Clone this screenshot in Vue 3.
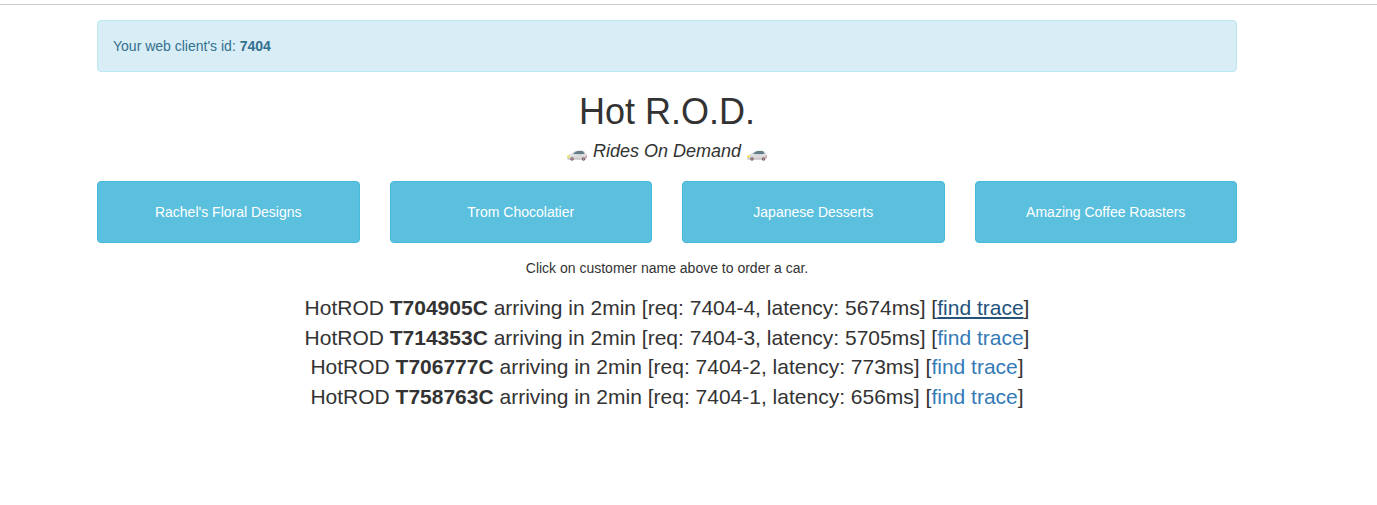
<script setup>
const clientId = 7404
const customers = [
  "Rachel's Floral Designs",
  'Trom Chocolatier',
  'Japanese Desserts',
  'Amazing Coffee Roasters',
]
const rides = [
  { car: 'T704905C', req: '7404-4', latency: '5674ms', active: true },
  { car: 'T714353C', req: '7404-3', latency: '5705ms' },
  { car: 'T706777C', req: '7404-2', latency: '773ms' },
  { car: 'T758763C', req: '7404-1', latency: '656ms' },
]
</script>

<template>
  <div class="page">
    <hr class="rule" />
    <main class="container">
      <div class="alert">Your web client's id: <strong>{{ clientId }}</strong></div>

      <svg class="defs" width="0" height="0" aria-hidden="true">
        <symbol id="car" viewBox="0 0 40 22">
          <path d="M1 12Q4 8 10 7Q15 1 22 1L31 1Q36 2 38 7Q40 9 40 14Q39 19 36 19L3 19Q0 18 0 14Z" fill="#d8d8da" />
          <path d="M12 8Q16 3 21 2L31 2Q34 4 35 8L24 9Z" fill="#657e88" />
          <path d="M2 11Q14 9 38 10" fill="none" stroke="#e9e9eb" stroke-width="2" />
          <path d="M1 18L37 18" stroke="#c4b9bb" stroke-width="2" />
          <ellipse cx="3" cy="13" rx="3" ry="2" fill="#f3e72c" />
          <path d="M38 10L40 15L37 15Z" fill="#d86966" />
          <circle cx="10" cy="18" r="3.5" fill="#7a5c60" />
          <circle cx="10" cy="18" r="1.5" fill="#c0b0b3" />
          <circle cx="33" cy="18" r="3.5" fill="#7a5c60" />
          <circle cx="33" cy="18" r="1.5" fill="#c0b0b3" />
        </symbol>
      </svg>

      <header>
        <h1>Hot R.O.D.</h1>
        <h4>
          <svg class="car" aria-hidden="true"><use href="#car" /></svg>
          <em>Rides On Demand</em>
          <svg class="car" aria-hidden="true"><use href="#car" /></svg>
        </h4>
      </header>

      <div class="customers">
        <button v-for="name in customers" :key="name" type="button">{{ name }}</button>
      </div>

      <p class="tip">Click on customer name above to order a car.</p>

      <div class="rides">
        <div v-for="ride in rides" :key="ride.req">
          HotROD <b>{{ ride.car }}</b> arriving in 2min [req: {{ ride.req }}, latency: {{ ride.latency }}] [<a href="#" :class="{ active: ride.active }">find trace</a>]
        </div>
      </div>
    </main>
  </div>
</template>

<style>
body {
  margin: 0;
  background: #fff;
}
</style>

<style scoped>
.page {
  box-sizing: border-box;
  padding-top: 4px;
  color: #333;
  font: 14px/20px "Liberation Sans", Arial, sans-serif;
}
.rule {
  height: 1px;
  margin: 0 0 15px;
  border: 0;
  background: #ccc;
}
.container {
  box-sizing: border-box;
  width: calc(100% - 43px);
  max-width: 1334px;
  padding: 0 97px;
}
.alert {
  padding: 15px;
  border: 1px solid #bce8f1;
  border-radius: 4px;
  background: #d9edf7;
  color: #31708f;
}
.defs {
  position: absolute;
}
header {
  padding-top: 20px;
  text-align: center;
}
h1 {
  margin: 0 0 10px;
  font-size: 36px;
  font-weight: 400;
  line-height: 1.1;
}
h4 {
  display: flex;
  align-items: center;
  justify-content: center;
  gap: 6px;
  margin: 0 0 20px;
  font-size: 18px;
  font-weight: 400;
  line-height: 1.1;
}
.car {
  width: 20px;
  height: 11px;
  margin-top: 8px;
}
.customers {
  display: grid;
  grid-template-columns: repeat(4, 1fr);
  gap: 30px;
}
button {
  padding: 20px 12px;
  border: 1px solid #46b8da;
  border-radius: 4px;
  background: #5bc0de;
  color: #fff;
  font: inherit;
  cursor: pointer;
}
.tip {
  margin: 15px 0;
  text-align: center;
}
.rides {
  font-size: 21px;
  line-height: 1.4;
  text-align: center;
}
a {
  color: #337ab7;
  text-decoration: none;
}
a.active,
a:hover {
  color: #23527c;
  text-decoration: underline;
}
</style>
